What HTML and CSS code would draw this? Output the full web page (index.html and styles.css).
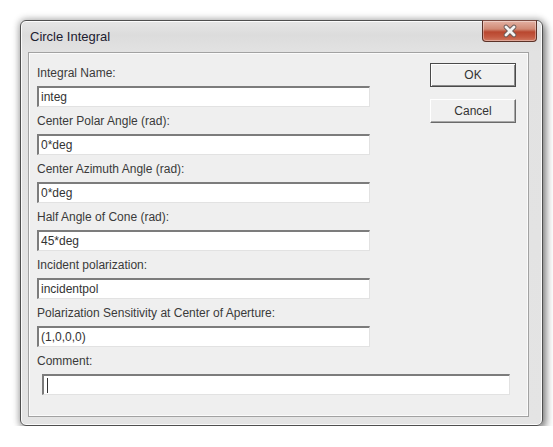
FILE: index.html
```html
<!DOCTYPE html>
<html>
<head>
<meta charset="utf-8">
<link rel="stylesheet" href="styles.css">
</head>
<body>
<div class="stage">
  <div class="window">
    <div class="titlebar">
      <span class="title">Circle Integral</span>
      <div class="close">
        <svg width="20" height="14" viewBox="0 0 20 14">
          <path d="M6 3 L14 11 M14 3 L6 11" stroke="#6a5a58" stroke-width="4.6" stroke-linecap="round"/>
          <path d="M6 3 L14 11 M14 3 L6 11" stroke="#f4f4f4" stroke-width="2.8" stroke-linecap="round"/>
        </svg>
      </div>
    </div>
    <div class="client">
      <div class="top">
        <div class="fields">
          <div class="group"><div class="label">Integral Name:</div><div class="input">integ</div></div>
          <div class="group"><div class="label">Center Polar Angle (rad):</div><div class="input">0*deg</div></div>
          <div class="group"><div class="label">Center Azimuth Angle (rad):</div><div class="input">0*deg</div></div>
          <div class="group"><div class="label">Half Angle of Cone (rad):</div><div class="input">45*deg</div></div>
          <div class="group"><div class="label">Incident polarization:</div><div class="input">incidentpol</div></div>
          <div class="group"><div class="label">Polarization Sensitivity at Center of Aperture:</div><div class="input">(1,0,0,0)</div></div>
        </div>
        <div class="buttons">
          <div class="btn btn-default">OK</div>
          <div class="btn">Cancel</div>
        </div>
      </div>
      <div class="group comment"><div class="label">Comment:</div><div class="input"><span class="caret"></span></div></div>
    </div>
  </div>
</div>
</body>
</html>
```
FILE: styles.css
```css
html, body {
  margin: 0;
  padding: 0;
  background: #ffffff;
}
.stage {
  padding: 20px 0 0 20px;
}
.window {
  width: 514px;
  height: 404px;
  border: 1px solid #4f4f4f;
  border-radius: 6px;
  background: linear-gradient(180deg, #e6e6e6 0px, #dcdcdc 14px, #e2e2e2 31px, #e4e4e4 100%);
  box-shadow: inset 0 0 0 1px rgba(255,255,255,0.85), 0 0 6px 2px rgba(0,0,0,0.22), 3px 4px 9px rgba(0,0,0,0.4);
  display: flex;
  flex-direction: column;
  padding: 0 0 0 7px;
  box-sizing: content-box;
}
.titlebar {
  height: 31px;
  display: flex;
  align-items: flex-start;
  justify-content: space-between;
}
.title {
  font-family: "Liberation Sans", Arial, sans-serif;
  font-size: 13px;
  color: #1c2030;
  margin: 8px 0 0 2px;
  line-height: 15px;
}
.close {
  width: 53px;
  height: 20px;
  margin: -1px 5px 0 0;
  border: 1px solid #5b3228;
  border-top-color: #7a4a40;
  border-radius: 0 0 4px 4px;
  background: linear-gradient(180deg, #e3b1a3 0%, #d08a75 40%, #b9472f 55%, #c45a42 80%, #d07a62 100%);
  box-shadow: inset 0 0 0 1px rgba(255,255,255,0.35);
  display: flex;
  align-items: center;
  justify-content: center;
}
.client {
  border: 1px solid #a2a2a2;
  box-shadow: inset 0 0 0 1px #fbfbfb;
  background: #efefef;
  padding: 10px 0 0 8px;
  box-sizing: content-box;
  display: flex;
  flex-direction: column;
  width: 491px;
  height: 353px;
}
.top {
  display: flex;
  gap: 60px;
}
.fields {
  width: 333px;
  margin-top: 2px;
  display: flex;
  flex-direction: column;
}
.group {
  display: flex;
  flex-direction: column;
  gap: 5px;
  margin-bottom: 6px;
}
.label {
  font-family: "Liberation Sans", Arial, sans-serif;
  font-size: 12px;
  line-height: 16px;
  height: 16px;
  color: #3a3a3a;
  white-space: nowrap;
}
.input {
  height: 18px;
  background: #ffffff;
  border-style: solid;
  border-width: 2px 1px 1px 2px;
  border-color: #7c7c7c #e2e2e2 #e2e2e2 #7c7c7c;
  font-family: "Liberation Sans", Arial, sans-serif;
  font-size: 12px;
  line-height: 18px;
  color: #333333;
  padding-left: 2px;
  display: flex;
  align-items: center;
}
.comment {
  margin-left: 5px;
  width: 468px;
}
.comment .label {
  margin-left: -5px;
}
.caret {
  width: 1px;
  height: 15px;
  background: #333;
  margin-left: 1px;
}
.buttons {
  width: 86px;
  display: flex;
  flex-direction: column;
  gap: 12px;
}
.btn {
  height: 24px;
  box-sizing: border-box;
  display: flex;
  align-items: center;
  justify-content: center;
  font-family: "Liberation Sans", Arial, sans-serif;
  font-size: 12px;
  color: #333;
  background: #f0f0f0;
  border-style: solid;
  border-width: 1px;
  border-color: #ffffff #6a6a6a #6a6a6a #ffffff;
  box-shadow: inset -1px -1px 0 #a8a8a8;
}
.btn-default {
  border: 1px solid #4a4a4a;
  box-shadow: inset 1px 1px 0 #ffffff, inset -1px -1px 0 #8a8a8a;
}
```
